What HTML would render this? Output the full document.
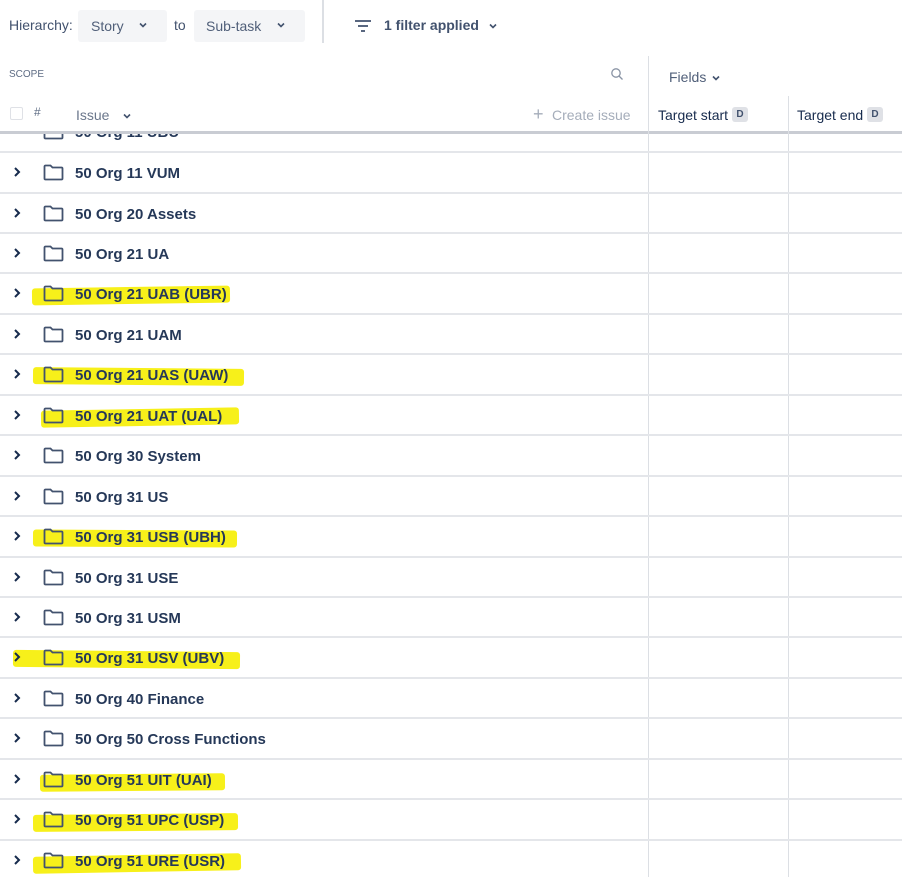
<!DOCTYPE html>
<html><head><style>
*{margin:0;padding:0;box-sizing:border-box}
body{width:902px;height:877px;overflow:hidden;background:#fff;font-family:"Liberation Sans",sans-serif;color:#172b4d;position:relative}
.a{position:absolute}
.row{position:absolute;left:0;width:902px;height:41px;border-top:2px solid #e4e6ea}
.row .t{position:absolute;left:75px;top:12px;font-size:15px;font-weight:bold;color:#253858;white-space:nowrap;z-index:2}
.row svg.f{position:absolute;left:43px;top:11px;z-index:2}
.row svg.c{position:absolute;left:12px;top:13px}
.hl{position:absolute;background:#f7f01a;height:17px;border-radius:3px;z-index:1}
.vl{position:absolute;width:1px;background:#dcdfe4}
</style></head><body>
<div class="a" style="left:9px;top:17px;font-size:14px;color:#42526e">Hierarchy:</div>
<div class="a" style="left:78px;top:10px;width:89px;height:32px;background:#f4f5f7;border-radius:3px"></div>
<div class="a" style="left:91px;top:18px;font-size:14px;color:#505f79">Story</div>
<svg class="a" style="left:138px;top:20px" width="10" height="10" viewBox="0 0 10 10"><path d="M2 3.5l3 3 3-3" fill="none" stroke="#42526e" stroke-width="1.6"/></svg>
<div class="a" style="left:174px;top:17px;font-size:14px;color:#42526e">to</div>
<div class="a" style="left:194px;top:10px;width:111px;height:32px;background:#f4f5f7;border-radius:3px"></div>
<div class="a" style="left:206px;top:18px;font-size:14px;color:#505f79">Sub-task</div>
<svg class="a" style="left:276px;top:20px" width="10" height="10" viewBox="0 0 10 10"><path d="M2 3.5l3 3 3-3" fill="none" stroke="#42526e" stroke-width="1.6"/></svg>
<div class="vl" style="left:322px;top:0;height:43px;width:2px"></div>
<svg class="a" style="left:354px;top:18px" width="18" height="16" viewBox="0 0 18 16"><path d="M1 3h16M4 8h10M7 13h4" stroke="#42526e" stroke-width="1.8"/></svg>
<div class="a" style="left:384px;top:17px;font-size:14px;font-weight:bold;color:#42526e">1 filter applied</div>
<svg class="a" style="left:488px;top:21px" width="10" height="10" viewBox="0 0 10 10"><path d="M2 3.5l3 3 3-3" fill="none" stroke="#42526e" stroke-width="1.6"/></svg>

<div class="a" style="left:9px;top:69px;font-size:10px;color:#5e6c84">SCOPE</div>
<svg class="a" style="left:610px;top:67px" width="14" height="14" viewBox="0 0 14 14"><circle cx="6" cy="6" r="4.2" fill="none" stroke="#8993a4" stroke-width="1.3"/><path d="M9 9l3.5 3.5" stroke="#8993a4" stroke-width="1.3"/></svg>
<div class="a" style="left:669px;top:69px;font-size:14px;color:#505f79">Fields</div>
<svg class="a" style="left:711px;top:73px" width="10" height="10" viewBox="0 0 10 10"><path d="M2 3.5l3 3 3-3" fill="none" stroke="#42526e" stroke-width="1.6"/></svg>

<div class="a" style="left:10px;top:107px;width:13px;height:13px;border:1.5px solid #dfe1e6;border-radius:2px"></div>
<div class="a" style="left:34px;top:105px;font-size:12px;color:#5e6c84">#</div>
<div class="a" style="left:76px;top:107px;font-size:14px;color:#6b778c">Issue</div>
<svg class="a" style="left:122px;top:111px" width="10" height="10" viewBox="0 0 10 10"><path d="M2 3.5l3 3 3-3" fill="none" stroke="#42526e" stroke-width="1.6"/></svg>
<div class="a" style="left:533px;top:104px;font-size:18px;color:#a5adba">+</div>
<div class="a" style="left:552px;top:107px;font-size:14px;color:#a5adba">Create issue</div>
<div class="a" style="left:658px;top:107px;font-size:14px;color:#172b4d">Target start</div>
<div class="a" style="left:732px;top:107px;width:16px;height:15px;background:#dfe1e6;border-radius:3px;font-size:10px;font-weight:bold;text-align:center;line-height:15px;color:#42526e">D</div>
<div class="a" style="left:797px;top:107px;font-size:14px;color:#172b4d">Target end</div>
<div class="a" style="left:867px;top:107px;width:16px;height:15px;background:#dfe1e6;border-radius:3px;font-size:10px;font-weight:bold;text-align:center;line-height:15px;color:#42526e">D</div>

<div class="a" style="left:0;top:112px;width:902px;height:40px;overflow:hidden;clip-path:inset(20px 0 0 0)">
<div class="row" style="top:0;border-top:none"><svg class="f" width="21" height="17" viewBox="0 0 21 17"><path d="M1.5 2.5a1 1 0 0 1 1-1h5l2 2h9a1 1 0 0 1 1 1v10a1 1 0 0 1-1 1h-16a1 1 0 0 1-1-1z" fill="none" stroke="#42526e" stroke-width="1.8"/></svg><div class="t">50 Org 11 UBU</div></div>
</div>
<div class="a" style="left:0;top:131px;width:902px;height:3px;background:#c9ccd3"></div>

<div class="vl" style="left:648px;top:56px;height:821px"></div>
<div class="vl" style="left:788px;top:96px;height:781px"></div>

<div class="row" style="top:151px"><svg class="c" width="10" height="12" viewBox="0 0 10 12"><path d="M3 2l4 4-4 4" fill="none" stroke="#172b4d" stroke-width="2"/></svg><svg class="f" width="21" height="17" viewBox="0 0 21 17"><path d="M1.5 2.5a1 1 0 0 1 1-1h5l2 2h9a1 1 0 0 1 1 1v10a1 1 0 0 1-1 1h-16a1 1 0 0 1-1-1z" fill="none" stroke="#42526e" stroke-width="1.8"/></svg><div class="t">50 Org 11 VUM</div></div>
<div class="row" style="top:192px"><svg class="c" width="10" height="12" viewBox="0 0 10 12"><path d="M3 2l4 4-4 4" fill="none" stroke="#172b4d" stroke-width="2"/></svg><svg class="f" width="21" height="17" viewBox="0 0 21 17"><path d="M1.5 2.5a1 1 0 0 1 1-1h5l2 2h9a1 1 0 0 1 1 1v10a1 1 0 0 1-1 1h-16a1 1 0 0 1-1-1z" fill="none" stroke="#42526e" stroke-width="1.8"/></svg><div class="t">50 Org 20 Assets</div></div>
<div class="row" style="top:232px"><svg class="c" width="10" height="12" viewBox="0 0 10 12"><path d="M3 2l4 4-4 4" fill="none" stroke="#172b4d" stroke-width="2"/></svg><svg class="f" width="21" height="17" viewBox="0 0 21 17"><path d="M1.5 2.5a1 1 0 0 1 1-1h5l2 2h9a1 1 0 0 1 1 1v10a1 1 0 0 1-1 1h-16a1 1 0 0 1-1-1z" fill="none" stroke="#42526e" stroke-width="1.8"/></svg><div class="t">50 Org 21 UA</div></div>
<div class="row" style="top:272px"><svg class="c" width="10" height="12" viewBox="0 0 10 12"><path d="M3 2l4 4-4 4" fill="none" stroke="#172b4d" stroke-width="2"/></svg><div class="hl" style="left:32px;top:13px;width:198px;transform:rotate(-0.8deg)"></div><svg class="f" width="21" height="17" viewBox="0 0 21 17"><path d="M1.5 2.5a1 1 0 0 1 1-1h5l2 2h9a1 1 0 0 1 1 1v10a1 1 0 0 1-1 1h-16a1 1 0 0 1-1-1z" fill="none" stroke="#42526e" stroke-width="1.8"/></svg><div class="t">50 Org 21 UAB (UBR)</div></div>
<div class="row" style="top:313px"><svg class="c" width="10" height="12" viewBox="0 0 10 12"><path d="M3 2l4 4-4 4" fill="none" stroke="#172b4d" stroke-width="2"/></svg><svg class="f" width="21" height="17" viewBox="0 0 21 17"><path d="M1.5 2.5a1 1 0 0 1 1-1h5l2 2h9a1 1 0 0 1 1 1v10a1 1 0 0 1-1 1h-16a1 1 0 0 1-1-1z" fill="none" stroke="#42526e" stroke-width="1.8"/></svg><div class="t">50 Org 21 UAM</div></div>
<div class="row" style="top:353px"><svg class="c" width="10" height="12" viewBox="0 0 10 12"><path d="M3 2l4 4-4 4" fill="none" stroke="#172b4d" stroke-width="2"/></svg><div class="hl" style="left:33px;top:13px;width:211px;transform:rotate(0.5deg)"></div><svg class="f" width="21" height="17" viewBox="0 0 21 17"><path d="M1.5 2.5a1 1 0 0 1 1-1h5l2 2h9a1 1 0 0 1 1 1v10a1 1 0 0 1-1 1h-16a1 1 0 0 1-1-1z" fill="none" stroke="#42526e" stroke-width="1.8"/></svg><div class="t">50 Org 21 UAS (UAW)</div></div>
<div class="row" style="top:394px"><svg class="c" width="10" height="12" viewBox="0 0 10 12"><path d="M3 2l4 4-4 4" fill="none" stroke="#172b4d" stroke-width="2"/></svg><div class="hl" style="left:41px;top:13px;width:198px;transform:rotate(-1deg)"></div><svg class="f" width="21" height="17" viewBox="0 0 21 17"><path d="M1.5 2.5a1 1 0 0 1 1-1h5l2 2h9a1 1 0 0 1 1 1v10a1 1 0 0 1-1 1h-16a1 1 0 0 1-1-1z" fill="none" stroke="#42526e" stroke-width="1.8"/></svg><div class="t">50 Org 21 UAT (UAL)</div></div>
<div class="row" style="top:434px"><svg class="c" width="10" height="12" viewBox="0 0 10 12"><path d="M3 2l4 4-4 4" fill="none" stroke="#172b4d" stroke-width="2"/></svg><svg class="f" width="21" height="17" viewBox="0 0 21 17"><path d="M1.5 2.5a1 1 0 0 1 1-1h5l2 2h9a1 1 0 0 1 1 1v10a1 1 0 0 1-1 1h-16a1 1 0 0 1-1-1z" fill="none" stroke="#42526e" stroke-width="1.8"/></svg><div class="t">50 Org 30 System</div></div>
<div class="row" style="top:475px"><svg class="c" width="10" height="12" viewBox="0 0 10 12"><path d="M3 2l4 4-4 4" fill="none" stroke="#172b4d" stroke-width="2"/></svg><svg class="f" width="21" height="17" viewBox="0 0 21 17"><path d="M1.5 2.5a1 1 0 0 1 1-1h5l2 2h9a1 1 0 0 1 1 1v10a1 1 0 0 1-1 1h-16a1 1 0 0 1-1-1z" fill="none" stroke="#42526e" stroke-width="1.8"/></svg><div class="t">50 Org 31 US</div></div>
<div class="row" style="top:515px"><svg class="c" width="10" height="12" viewBox="0 0 10 12"><path d="M3 2l4 4-4 4" fill="none" stroke="#172b4d" stroke-width="2"/></svg><div class="hl" style="left:33px;top:13px;width:204px;transform:rotate(0.3deg)"></div><svg class="f" width="21" height="17" viewBox="0 0 21 17"><path d="M1.5 2.5a1 1 0 0 1 1-1h5l2 2h9a1 1 0 0 1 1 1v10a1 1 0 0 1-1 1h-16a1 1 0 0 1-1-1z" fill="none" stroke="#42526e" stroke-width="1.8"/></svg><div class="t">50 Org 31 USB (UBH)</div></div>
<div class="row" style="top:556px"><svg class="c" width="10" height="12" viewBox="0 0 10 12"><path d="M3 2l4 4-4 4" fill="none" stroke="#172b4d" stroke-width="2"/></svg><svg class="f" width="21" height="17" viewBox="0 0 21 17"><path d="M1.5 2.5a1 1 0 0 1 1-1h5l2 2h9a1 1 0 0 1 1 1v10a1 1 0 0 1-1 1h-16a1 1 0 0 1-1-1z" fill="none" stroke="#42526e" stroke-width="1.8"/></svg><div class="t">50 Org 31 USE</div></div>
<div class="row" style="top:596px"><svg class="c" width="10" height="12" viewBox="0 0 10 12"><path d="M3 2l4 4-4 4" fill="none" stroke="#172b4d" stroke-width="2"/></svg><svg class="f" width="21" height="17" viewBox="0 0 21 17"><path d="M1.5 2.5a1 1 0 0 1 1-1h5l2 2h9a1 1 0 0 1 1 1v10a1 1 0 0 1-1 1h-16a1 1 0 0 1-1-1z" fill="none" stroke="#42526e" stroke-width="1.8"/></svg><div class="t">50 Org 31 USM</div></div>
<div class="row" style="top:636px"><div class="hl" style="left:13px;top:13px;width:227px;transform:rotate(0.6deg)"></div><svg class="c" style="z-index:2" width="10" height="12" viewBox="0 0 10 12"><path d="M3 2l4 4-4 4" fill="none" stroke="#172b4d" stroke-width="2"/></svg><svg class="f" width="21" height="17" viewBox="0 0 21 17"><path d="M1.5 2.5a1 1 0 0 1 1-1h5l2 2h9a1 1 0 0 1 1 1v10a1 1 0 0 1-1 1h-16a1 1 0 0 1-1-1z" fill="none" stroke="#42526e" stroke-width="1.8"/></svg><div class="t">50 Org 31 USV (UBV)</div></div>
<div class="row" style="top:677px"><svg class="c" width="10" height="12" viewBox="0 0 10 12"><path d="M3 2l4 4-4 4" fill="none" stroke="#172b4d" stroke-width="2"/></svg><svg class="f" width="21" height="17" viewBox="0 0 21 17"><path d="M1.5 2.5a1 1 0 0 1 1-1h5l2 2h9a1 1 0 0 1 1 1v10a1 1 0 0 1-1 1h-16a1 1 0 0 1-1-1z" fill="none" stroke="#42526e" stroke-width="1.8"/></svg><div class="t">50 Org 40 Finance</div></div>
<div class="row" style="top:717px"><svg class="c" width="10" height="12" viewBox="0 0 10 12"><path d="M3 2l4 4-4 4" fill="none" stroke="#172b4d" stroke-width="2"/></svg><svg class="f" width="21" height="17" viewBox="0 0 21 17"><path d="M1.5 2.5a1 1 0 0 1 1-1h5l2 2h9a1 1 0 0 1 1 1v10a1 1 0 0 1-1 1h-16a1 1 0 0 1-1-1z" fill="none" stroke="#42526e" stroke-width="1.8"/></svg><div class="t">50 Org 50 Cross Functions</div></div>
<div class="row" style="top:758px"><svg class="c" width="10" height="12" viewBox="0 0 10 12"><path d="M3 2l4 4-4 4" fill="none" stroke="#172b4d" stroke-width="2"/></svg><div class="hl" style="left:40px;top:14px;width:185px;transform:rotate(-0.5deg)"></div><svg class="f" width="21" height="17" viewBox="0 0 21 17"><path d="M1.5 2.5a1 1 0 0 1 1-1h5l2 2h9a1 1 0 0 1 1 1v10a1 1 0 0 1-1 1h-16a1 1 0 0 1-1-1z" fill="none" stroke="#42526e" stroke-width="1.8"/></svg><div class="t">50 Org 51 UIT (UAI)</div></div>
<div class="row" style="top:798px"><svg class="c" width="10" height="12" viewBox="0 0 10 12"><path d="M3 2l4 4-4 4" fill="none" stroke="#172b4d" stroke-width="2"/></svg><div class="hl" style="left:33px;top:14px;width:205px;transform:rotate(-0.5deg)"></div><svg class="f" width="21" height="17" viewBox="0 0 21 17"><path d="M1.5 2.5a1 1 0 0 1 1-1h5l2 2h9a1 1 0 0 1 1 1v10a1 1 0 0 1-1 1h-16a1 1 0 0 1-1-1z" fill="none" stroke="#42526e" stroke-width="1.8"/></svg><div class="t">50 Org 51 UPC (USP)</div></div>
<div class="row" style="top:839px"><svg class="c" width="10" height="12" viewBox="0 0 10 12"><path d="M3 2l4 4-4 4" fill="none" stroke="#172b4d" stroke-width="2"/></svg><div class="hl" style="left:33px;top:14px;width:208px;transform:rotate(-1deg)"></div><svg class="f" width="21" height="17" viewBox="0 0 21 17"><path d="M1.5 2.5a1 1 0 0 1 1-1h5l2 2h9a1 1 0 0 1 1 1v10a1 1 0 0 1-1 1h-16a1 1 0 0 1-1-1z" fill="none" stroke="#42526e" stroke-width="1.8"/></svg><div class="t">50 Org 51 URE (USR)</div></div>
</body></html>
